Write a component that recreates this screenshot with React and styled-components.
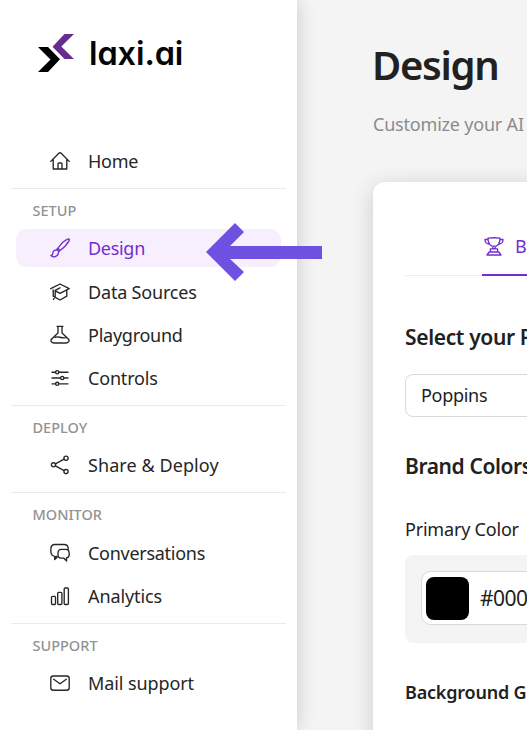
import React from "react";
import styled, { createGlobalStyle, css } from "styled-components";

const GlobalStyle = createGlobalStyle`
  * { box-sizing: border-box; }
  body {
    margin: 0;
    overflow: hidden;
    background: #f4f4f4;
    color: #212121;
    font-family: "Noto Sans", "Open Sans", sans-serif;
  }
`;

const Page = styled.div`
  display: flex;
  width: 527px;
  height: 730px;
  overflow: hidden;
  position: relative;
`;

const Sidebar = styled.aside`
  flex: 0 0 297px;
  height: 730px;
  background: #fff;
  box-shadow: 0 0 18px rgba(0, 0, 0, 0.18);
  padding: 33px 11px 0;
`;

const Brand = styled.div`
  display: flex;
  height: 109px;
  padding-left: 26px;
`;

const BrandMark = styled.svg`
  width: 38px;
  height: 40px;
  flex: none;
`;

const BrandName = styled.span`
  margin-left: 14px;
  font: 600 32.5px/42px Inter, sans-serif;
  font-feature-settings: "cv11";
  letter-spacing: -0.1px;
  color: #050505;
  white-space: nowrap;
`;

const Section = styled.section`
  width: 275px;
  padding-bottom: 8px;
  ${(p) => p.$divided && css`border-top: 1px solid #ebebeb;`}
`;

const SectionLabel = styled.h2`
  margin: 0;
  height: 40.25px;
  padding-left: 21.5px;
  font-size: 14.5px;
  font-weight: 500;
  line-height: 43px;
  letter-spacing: 0;
  color: #929292;
`;

const NavList = styled.nav`
  display: flex;
  flex-direction: column;
  gap: 5.3px;
`;

const NavItem = styled.a`
  display: flex;
  align-items: center;
  gap: 18px;
  height: 38px;
  margin: 0 5px;
  padding-left: 34px;
  border-radius: 11px;
  font-size: 18px;
  letter-spacing: ${(p) => p.$track || 0}px;
  white-space: nowrap;
  color: ${(p) => (p.$active ? "#722ed1" : "#262626")};
  background: ${(p) => (p.$active ? "#f7effe" : "transparent")};
`;

const Glyph = styled.svg`
  width: 20px;
  height: 20px;
  flex: none;
  fill: none;
  stroke: currentColor;
  stroke-width: 1.35;
  stroke-linecap: round;
  stroke-linejoin: round;
`;

const Pointer = styled.svg`
  position: absolute;
  left: 206px;
  top: 222px;
  width: 117px;
  height: 60px;
`;

const Main = styled.main`
  flex: none;
  width: 600px;
  padding: 36px 0 0 76px;
`;

const Title = styled.h1`
  margin: 0 0 0 -1px;
  font-size: 40px;
  font-weight: 600;
  line-height: 58px;
  letter-spacing: -1.3px;
`;

const Subtitle = styled.p`
  margin: 18px 0 0;
  height: 70px;
  font-size: 18px;
  line-height: 25px;
  letter-spacing: -0.2px;
  color: #8c8c8c;
  white-space: nowrap;
`;

const Card = styled.div`
  height: 700px;
  border-radius: 12px;
  padding: 33px 32px;
  background: #fff;
  box-shadow: 0 4px 22px rgba(0, 0, 0, 0.16);
`;

const TabBar = styled.div`
  display: flex;
  height: 61px;
  padding-left: 77px;
  border-bottom: 1px solid #ededed;
`;

const Tab = styled.div`
  display: flex;
  align-items: center;
  gap: 11px;
  width: 200px;
  height: 61px;
  padding: 3px 0 0 2px;
  border-bottom: 2px solid #722ed1;
  color: #722ed1;
  font-size: 18px;
`;

const Heading = styled.h3`
  margin: ${(p) => p.$top}px 0 0;
  font-size: ${(p) => p.$size || 21}px;
  font-weight: 600;
  line-height: 28px;
  letter-spacing: ${(p) => p.$track}px;
  white-space: nowrap;
`;

const Select = styled.div`
  height: 43px;
  margin-top: 23px;
  padding-left: 15px;
  border: 1px solid #d9d9d9;
  border-radius: 8px;
  font-size: 18px;
  line-height: 41px;
  letter-spacing: -0.3px;
`;

const FieldLabel = styled.div`
  margin-top: 36px;
  font-size: 18px;
  line-height: 26px;
  letter-spacing: -0.2px;
`;

const ColorPanel = styled.div`
  margin-top: 13px;
  height: 88px;
  padding: 16px;
  border-radius: 8px;
  background: #f4f4f4;
`;

const ColorField = styled.div`
  display: flex;
  align-items: center;
  gap: 11px;
  height: 54px;
  padding: 4px;
  border: 1px solid #d9d9d9;
  border-radius: 10px;
  background: #fff;
  font-size: 21px;
  letter-spacing: -0.5px;
`;

const Swatch = styled.span`
  width: 43px;
  height: 43px;
  border-radius: 8px;
  background: #000;
`;

const icons = {
  home: <path d="M.8 10.4 8.8 2.2Q10 1.2 11.2 2.2L19.2 10.4M3.2 8.5V18h13.6V8.5M8 18v-5q0-1 1-1h2q1 0 1 1v5" />,
  brush: <path d="M8 10.2C11 5.7 15 2 18.5.9c1 0 1 1 .5 2C17 6.500 13.600 10 9.900 12.500ZM8 10.200 6.800 11.200 8.900 13.600 9.900 12.500M6.800 12C4.400 11.900 2.800 13.300 2.900 15.100 2.900 16.500 1.700 17.500.8 17.600 3.400 20.200 8.800 18.500 8.600 13.800" />,
  cap: <path d="M.8 6.700 10 2l9.200 4.700L10 11.300 5.800 9.100M3.200 8v6.200L10 18l6.800-3.800V8M10 5.800 5.200 8.300v6.400L3.400 17.500" />,
  flask: <path d="M7 1.300h6M8 1.300V8L1.400 14.200C.2 15.900 1.600 18 4 18h12c2.400 0 3.800-2.100 2.600-3.800L12 8V1.300M5.200 12.300c3-1.700 5.500 1.300 10.800.4" />,
  controls: <g><path d="M2 4.200h3.600m3.200 0H18M2 10h8.600m3.200 0H18M2 15.800h3.600m3.200 0H18" /><circle cx="7.200" cy="4.200" r="1.600" /><circle cx="12.200" cy="10" r="1.600" /><circle cx="7.200" cy="15.800" r="1.600" /></g>,
  share: <g><circle cx="3.500" cy="9.800" r="2.100" /><circle cx="16" cy="3.200" r="2.100" /><circle cx="16" cy="16.600" r="2.100" /><path d="m5.400 8.800 8.700-4.600M5.400 10.800l8.700 4.800" /></g>,
  chat: <path d="M6.800 13.400H6L4.700 16.500V13.300C2.200 12.800 1 11.300.9 9V5.500C1 2.900 2.500 1.500 5 1.500h9c2.500 0 4 1.300 4.200 3.700V6.400M8 10.200C8 7.500 9.200 6.300 11.500 6.300h4c2.400 0 3.700 1.300 3.700 3.600v1.600c0 2-1 3.200-2.800 3.500L16.600 18l-3-2.900H11c-2 0-3-1.200-3-3.300ZM4.700 16.500l2.300-2" />,
  bars: <g><rect x="1.500" y="10.300" width="4" height="8.200" rx="1" /><rect x="7.700" y="6.300" width="4.200" height="12.200" rx="1" /><rect x="14.200" y="2" width="4.200" height="16.500" rx="1" /></g>,
  mail: <g><rect x=".8" y="3" width="18.400" height="14.200" rx="2.500" /><path d="M3.700 6.200 10 10.800l6.300-4.600" /></g>,
  trophy: <path d="M4 2.200Q10 1.200 16 2.200C16 7 14 10.300 10 10.300S4 7 4 2.200M4 3.500H1C.8 6 2.600 7.800 4.700 8M16 3.500h3c.2 2.500-1.600 4.300-3.700 4.500M8.800 10.300v2.400h2.400v-2.400M6.400 16v-3.200h7.200V16M5.200 16h9.600L17 19H3Z" />,
};

const Icon = ({ name }) => <Glyph viewBox="0 0 20 20" aria-hidden="true">{icons[name]}</Glyph>;

const menu = [
  { items: [{ icon: "home", text: "Home", track: -0.3 }] },
  {
    label: "SETUP",
    items: [
      { icon: "brush", text: "Design", track: -0.3, active: true },
      { icon: "cap", text: "Data Sources", track: -0.18 },
      { icon: "flask", text: "Playground", track: -0.25 },
      { icon: "controls", text: "Controls", track: -0.18 },
    ],
  },
  { label: "DEPLOY", items: [{ icon: "share", text: "Share & Deploy", track: 0.08 }] },
  {
    label: "MONITOR",
    items: [
      { icon: "chat", text: "Conversations", track: -0.28 },
      { icon: "bars", text: "Analytics", track: -0.1 },
    ],
  },
  { label: "SUPPORT", items: [{ icon: "mail", text: "Mail support", track: -0.1 }] },
];

export default function App() {
  return (
    <>
      <GlobalStyle />
      <Page>
        <Sidebar>
          <Brand>
            <BrandMark viewBox="0 0 38 40">
              <path fill="#662d91" d="M27.500 1H37L24.300 13.500 37 26H27.500L15.500 13.700Z" />
              <path fill="#000" d="M1 14h10L23 26.300 11 39H1L13.500 26.500Z" />
            </BrandMark>
            <BrandName>laxi.ai</BrandName>
          </Brand>
          {menu.map((section, i) => (
            <Section key={i} $divided={i > 0}>
              {section.label && <SectionLabel>{section.label}</SectionLabel>}
              <NavList>
                {section.items.map((item) => (
                  <NavItem key={item.text} $active={item.active} $track={item.track}>
                    <Icon name={item.icon} />
                    {item.text}
                  </NavItem>
                ))}
              </NavList>
            </Section>
          ))}
        </Sidebar>
        <Main>
          <Title>Design</Title>
          <Subtitle>Customize your AI</Subtitle>
          <Card>
            <TabBar>
              <Tab>
                <Icon name="trophy" />
                B
              </Tab>
            </TabBar>
            <Heading $top={47} $track={-0.35}>Select your F</Heading>
            <Select>Poppins</Select>
            <Heading $top={35} $track={-0.4}>Brand Colors</Heading>
            <FieldLabel>Primary Color</FieldLabel>
            <ColorPanel>
              <ColorField>
                <Swatch />
                #000
              </ColorField>
            </ColorPanel>
            <Heading $top={35} $size={18} $track={-0.2}>Background G</Heading>
          </Card>
        </Main>
        <Pointer viewBox="0 0 117 60" aria-hidden="true">
          <path fill="#6e51e0" d="M0 30 29 1 38 10 24 24H116V37H24L38 50 29 59Z" />
        </Pointer>
      </Page>
    </>
  );
}
